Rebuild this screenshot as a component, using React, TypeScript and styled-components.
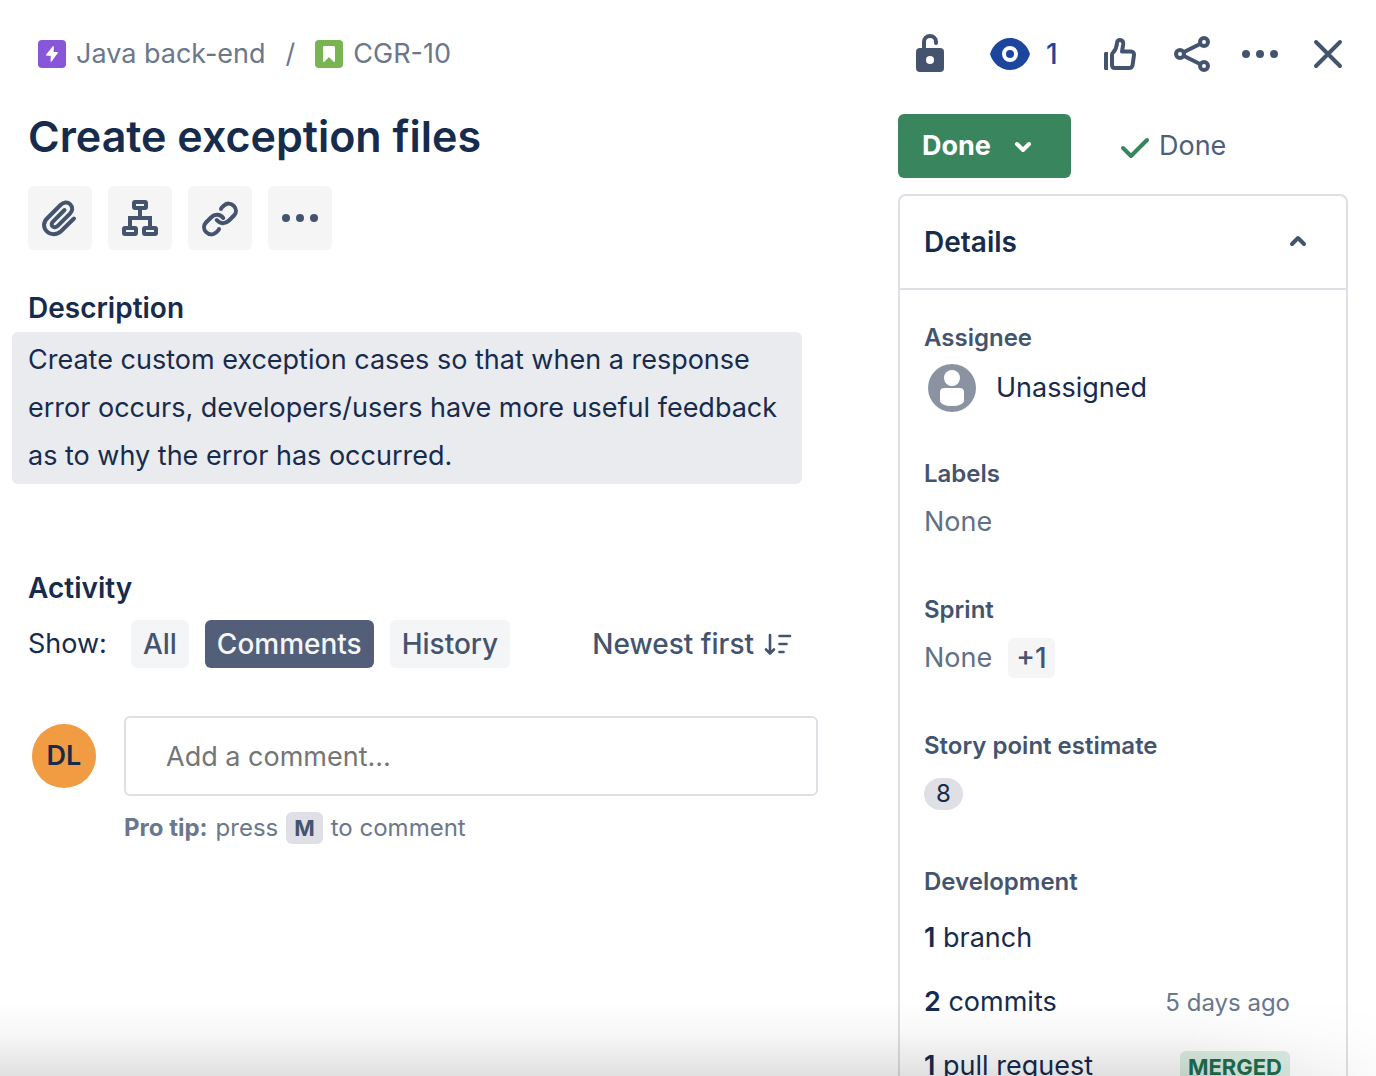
import React from "react";
import styled, { createGlobalStyle } from "styled-components";

const color = {
  text: "#172b4d",
  secondary: "#44546f",
  subtle: "#626f86",
  crumb: "#6b778c",
  line: "#dfe0e5",
  blue: "#1c469e",
  green: "#39855e",
};

const GlobalStyle = createGlobalStyle`
  *, *::before, *::after { box-sizing: border-box; }
  body {
    margin: 0;
    background: #fff;
    color: ${color.text};
    font-family: Inter, "Liberation Sans", sans-serif;
    font-size: 27px;
    line-height: 32px;
  }
  h1, h2, h3, p, ol, ul { margin: 0; padding: 0; }
  button, input { font: inherit; color: inherit; }
  a { color: inherit; text-decoration: none; }
`;

const Dialog = styled.div`
  display: grid;
  grid-template-columns: minmax(0, 1fr) 450px;
  column-gap: 80px;
  height: 100vh;
  padding: 28px 28px 0;
  overflow: hidden;
`;

const Column = styled.div`
  display: flex;
  flex-direction: column;
  min-width: 0;
`;

const Bar = styled.div`
  display: flex;
  align-items: center;
  height: 52px;
  flex-shrink: 0;
`;

/* ---------- breadcrumbs ---------- */

const Crumbs = styled.ol`
  display: flex;
  align-items: center;
  gap: 20px;
  padding-left: 10px;
  list-style: none;
  color: ${color.crumb};
`;

const Crumb = styled.a`
  display: flex;
  align-items: center;
  gap: 10px;
`;

/* ---------- header actions ---------- */

const Actions = styled(Bar)`
  justify-content: space-between;
  padding-left: 12px;
`;

const ActionGroup = styled.div<{ $gap: number }>`
  display: flex;
  align-items: center;
  gap: ${(p) => p.$gap}px;
`;

const IconButton = styled.button`
  display: flex;
  align-items: center;
  gap: 16px;
  min-width: 40px;
  height: 40px;
  padding: 0;
  border: 0;
  background: none;
  color: ${color.secondary};
  cursor: pointer;
`;

const WatchButton = styled(IconButton)`
  color: ${color.blue};
  font-size: 28px;
  font-weight: 500;
`;

/* ---------- main column ---------- */

const Title = styled.h1`
  margin-top: 28px;
  font-size: 43px;
  line-height: 56px;
  font-weight: 600;
`;

const Tools = styled.div`
  display: flex;
  gap: 16px;
  margin-top: 22px;
`;

const ToolButton = styled.button`
  display: grid;
  place-items: center;
  width: 64px;
  height: 64px;
  padding: 0;
  border: 0;
  border-radius: 6px;
  background: #f5f5f6;
  color: ${color.secondary};
  cursor: pointer;
`;

const Heading = styled.h2`
  font-size: 28px;
  line-height: 32px;
  font-weight: 600;
`;

const Section = styled.section<{ $space: number }>`
  margin-top: ${(p) => p.$space}px;
`;

const Description = styled.p`
  margin: 8px 16px 0 -16px;
  padding: 4px 16px;
  border-radius: 6px;
  background: #eaebef;
  line-height: 48px;
`;

const FilterRow = styled.div`
  display: flex;
  align-items: center;
  justify-content: space-between;
  margin-top: 16px;
  padding-right: 24px;
`;

const Filters = styled.div`
  display: flex;
  align-items: center;
  gap: 16px;
`;

const FilterLabel = styled.span`
  margin-right: 8px;
`;

const Filter = styled.button<{ $active?: boolean }>`
  height: 48px;
  padding: 0 12px;
  border: 0;
  border-radius: 6px;
  background: ${(p) => (p.$active ? "#535f78" : "#f4f5f7")};
  color: ${(p) => (p.$active ? "#f4f5f7" : color.secondary)};
  font-size: 28px;
  font-weight: 500;
  cursor: pointer;
`;

const SortButton = styled.button`
  display: flex;
  align-items: center;
  gap: 8px;
  padding: 0;
  border: 0;
  background: none;
  color: ${color.secondary};
  font-size: 28px;
  font-weight: 500;
  cursor: pointer;
`;

const Composer = styled.div`
  display: grid;
  grid-template-columns: 64px minmax(0, 1fr);
  column-gap: 28px;
  row-gap: 16px;
  align-items: center;
  margin-top: 48px;
  padding-left: 4px;
`;

const Avatar = styled.span`
  display: grid;
  place-items: center;
  width: 64px;
  height: 64px;
  border-radius: 50%;
  background: #f19c42;
  font-weight: 600;
`;

const CommentInput = styled.input`
  width: 100%;
  height: 80px;
  padding: 0 40px;
  border: 2px solid ${color.line};
  border-radius: 6px;
  background: #fff;
  &::placeholder {
    color: #757575;
    opacity: 1;
  }
`;

const Tip = styled.p`
  grid-column: 2;
  display: flex;
  align-items: center;
  gap: 8px;
  color: ${color.crumb};
  font-size: 24px;
`;

const Key = styled.kbd`
  padding: 0 8px;
  border-radius: 6px;
  background: ${color.line};
  color: ${color.secondary};
  font-family: inherit;
  font-size: 22px;
  font-weight: 700;
`;

/* ---------- side column ---------- */

const StatusRow = styled.div`
  display: flex;
  align-items: center;
  gap: 48px;
  margin-top: 34px;
`;

const StatusButton = styled.button`
  display: flex;
  align-items: center;
  gap: 20px;
  height: 64px;
  padding: 0 36px 0 24px;
  border: 0;
  border-radius: 6px;
  background: ${color.green};
  color: #fff;
  font-weight: 700;
  cursor: pointer;
`;

const Resolution = styled.span`
  display: flex;
  align-items: center;
  gap: 8px;
  color: #505f79;
`;

const Panel = styled.section`
  margin-top: 16px;
  border: 2px solid ${color.line};
  border-radius: 8px;
`;

const PanelHeader = styled.button`
  display: flex;
  align-items: center;
  justify-content: space-between;
  width: 100%;
  height: 94px;
  padding: 0 36px 0 24px;
  border: 0;
  border-bottom: 2px solid ${color.line};
  background: none;
  color: ${color.secondary};
  cursor: pointer;
`;

const PanelTitle = styled(Heading).attrs({ as: "span" })`
  color: ${color.text};
`;

const Fields = styled.div`
  padding: 36px 56px 24px 24px;
`;

const Field = styled.div`
  min-height: 136px;
`;

const FieldLabel = styled.h3`
  color: ${color.secondary};
  font-size: 24px;
  line-height: 24px;
  font-weight: 600;
`;

const Value = styled.div<{ $muted?: boolean }>`
  display: flex;
  align-items: center;
  gap: 16px;
  min-height: 48px;
  margin-top: 12px;
  color: ${(p) => (p.$muted ? color.subtle : color.text)};
`;

const Assignee = styled(Value)`
  gap: 20px;
  min-height: 52px;
  padding-left: 4px;
`;

const MoreButton = styled.button`
  height: 40px;
  padding: 0 8px;
  border: 0;
  border-radius: 6px;
  background: #f5f5f6;
  color: ${color.secondary};
  font-size: 28px;
  font-weight: 500;
  cursor: pointer;
`;

const Points = styled.span`
  padding: 0 12px;
  border-radius: 16px;
  background: ${color.line};
  font-size: 24px;
`;

const DevList = styled.ul`
  margin-top: 12px;
  list-style: none;
`;

const DevItem = styled.li`
  display: flex;
  align-items: baseline;
  justify-content: space-between;
  height: 64px;
  padding-top: 16px;
  white-space: nowrap;
`;

const Count = styled.b`
  font-weight: 600;
`;

const When = styled.span`
  color: ${color.crumb};
  font-size: 24px;
`;

const Lozenge = styled.span`
  padding: 0 8px;
  border-radius: 6px;
  background: #dcefe4;
  color: #216e4e;
  font-size: 22px;
  font-weight: 700;
`;

const BottomShade = styled.div`
  position: fixed;
  inset: auto 0 0 0;
  height: 76px;
  background: linear-gradient(
    to bottom,
    rgba(0, 0, 0, 0),
    rgba(0, 0, 0, 0.03) 45%,
    rgba(0, 0, 0, 0.12)
  );
  mask-image: linear-gradient(to right, #000 86%, rgba(0, 0, 0, 0.15));
  pointer-events: none;
`;

/* ---------- icons ---------- */

type IconProps = { w?: number; h?: number; children: React.ReactNode };

const Icon = ({ w = 40, h = 40, children }: IconProps) => (
  <svg
    width={w}
    height={h}
    viewBox={`0 0 ${w} ${h}`}
    fill="none"
    stroke="currentColor"
    strokeWidth={4}
    strokeLinecap="round"
    strokeLinejoin="round"
    aria-hidden="true"
  >
    {children}
  </svg>
);

const EpicIcon = () => (
  <Icon w={28} h={28}>
    <rect width="28" height="28" rx="4" fill="#8856d9" stroke="none" />
    <path
      d="M14.600 6.500 8.200 14.600c-.4.6-.1 1.200.6 1.200h4l-.3 5.200c0 .9.6 1.100 1.100.4l6-8.200c.4-.6.1-1.200-.6-1.200h-3.400l.2-5.100c0-.9-.5-1.100-1-.4Z"
      fill="#fff"
      stroke="none"
    />
  </Icon>
);

const StoryIcon = () => (
  <Icon w={28} h={28}>
    <rect width="28" height="28" rx="4" fill="#78b550" stroke="none" />
    <path
      d="M9.500 6h9c.9 0 1.500.6 1.500 1.500v13.700c0 .8-.8 1.100-1.400.5L14 17l-4.600 4.700c-.6.6-1.400.3-1.400-.5V7.500C8 6.600 8.600 6 9.500 6Z"
      fill="#fff"
      stroke="none"
    />
  </Icon>
);

const UnlockIcon = () => (
  <Icon>
    <path d="M14 16V8a6 6 0 0 1 12 0v1" />
    <rect x="6" y="14" width="28" height="24" rx="4" fill="currentColor" stroke="none" />
    <circle cx="20" cy="26" r="4" fill="#fff" stroke="none" />
  </Icon>
);

const EyeIcon = () => (
  <Icon>
    <path
      d="M0 20C2.500 11 10.500 4 20 4s17.500 7 20 16c-2.500 9-10.500 16-20 16S2.500 29 0 20Z"
      fill="currentColor"
      stroke="none"
    />
    <circle cx="20" cy="20" r="6" fill="currentColor" stroke="#fff" />
  </Icon>
);

const LikeIcon = () => (
  <Icon>
    <path d="M4 19.500c0-.8.6-1.500 1.500-1.500H8v18H5.500c-.9 0-1.500-.6-1.500-1.500Z" fill="currentColor" stroke="none" />
    <path d="M12 21c0-1 .3-1.600 1-2.300 2.700-2.700 3.700-5.700 4-9.500C17.200 7 18.300 6 20 6c2.400 0 3.500 1.900 3.200 4.300L22 17.500h9c2 0 3.300 1.500 3 3.500l-1.400 10c-.3 2-1.600 3-3.600 3H15c-2 0-3-1-3-3Z" />
  </Icon>
);

const ShareIcon = () => (
  <Icon>
    <circle cx="8" cy="20" r="4" />
    <circle cx="32" cy="8" r="4" />
    <circle cx="32" cy="32" r="4" />
    <path d="m12 18 16-8M12 22l16 8" />
  </Icon>
);

const DotsIcon = () => (
  <Icon>
    <g fill="currentColor" stroke="none">
      <circle cx="6" cy="20" r="4" />
      <circle cx="20" cy="20" r="4" />
      <circle cx="34" cy="20" r="4" />
    </g>
  </Icon>
);

const CloseIcon = () => (
  <Icon>
    <path d="m8 8 24 24M32 8 8 32" />
  </Icon>
);

const ClipIcon = () => (
  <Icon>
    <path d="M34 20.500 21 33.200c-4.300 4-10.400 3.800-14.200.2-3.700-3.600-3.700-9 .2-12.900L20.500 7c3-3 7-3.400 9.800-.6 2.700 2.700 2.500 6.500-.5 9.500L18 27.600c-1.900 1.900-4.200 2.100-5.500.8-1.300-1.300-1.100-3.200.7-5L24.500 12" />
  </Icon>
);

const TreeIcon = () => (
  <Icon>
    <rect x="14" y="4" width="12" height="6" rx="1" />
    <rect x="4" y="30" width="12" height="6" rx="1" />
    <rect x="24" y="30" width="12" height="6" rx="1" />
    <path d="M20 11v8M10 29V20h20v9" strokeLinejoin="miter" />
  </Icon>
);

const LinkIcon = () => (
  <Icon>
    <path d="M21 11c0-.6 1.500-2.200 3-3.500 3-2.600 7-2.500 9.800.3 2.800 2.900 2.900 6.900.2 9.700l-5 5c-3.700 3.700-9 3.500-12.300-.5" />
    <path d="M19 31c0 .6-1.500 2.200-3 3.500-3 2.600-7 2.500-9.800-.3-2.800-2.900-2.900-6.900-.2-9.700l5-5c3.700-3.700 9-3.500 12.300.5" />
  </Icon>
);

const ChevronDown = () => (
  <Icon w={24} h={24}>
    <path d="m6 10 6 6 6-6" />
  </Icon>
);

const ChevronUp = () => (
  <Icon w={24} h={24}>
    <path d="m6 14 6-6 6 6" />
  </Icon>
);

const CheckIcon = () => (
  <Icon w={32} h={32}>
    <path d="m4 18 8 8L28 10" stroke={color.green} />
  </Icon>
);

const SortIcon = () => (
  <Icon w={32} h={32}>
    <g strokeWidth="2.600">
      <path d="M8 7v18M4 21.500l4 4 4-4M17.500 8h10.500M17.500 16h7M17.500 24h4" />
    </g>
  </Icon>
);

const PersonIcon = () => (
  <Icon w={48} h={48}>
    <g stroke="none">
      <circle cx="24" cy="24" r="24" fill="#8b93a3" />
      <circle cx="24" cy="14" r="8" fill="#fff" />
      <path d="M12 28c0-2.400 1.600-4 4-4h16c2.400 0 4 1.600 4 4v8c0 4-5.500 6-12 6s-12-2-12-6Z" fill="#fff" />
    </g>
  </Icon>
);

/* ---------- page ---------- */

export default function App() {
  return (
    <>
      <GlobalStyle />
      <Dialog role="dialog" aria-labelledby="issue-title">
        <Column as="main">
          <Bar as="nav" aria-label="Breadcrumbs">
            <Crumbs>
              <li>
                <Crumb href="#epic">
                  <EpicIcon />
                  Java back-end
                </Crumb>
              </li>
              <li aria-hidden="true">/</li>
              <li>
                <Crumb href="#issue">
                  <StoryIcon />
                  CGR-10
                </Crumb>
              </li>
            </Crumbs>
          </Bar>

          <Title id="issue-title">Create exception files</Title>

          <Tools>
            <ToolButton aria-label="Attach"><ClipIcon /></ToolButton>
            <ToolButton aria-label="Add a child issue"><TreeIcon /></ToolButton>
            <ToolButton aria-label="Link issue"><LinkIcon /></ToolButton>
            <ToolButton aria-label="More"><DotsIcon /></ToolButton>
          </Tools>

          <Section $space={42}>
            <Heading>Description</Heading>
            <Description>
              Create custom exception cases so that when a response error
              occurs, developers/users have more useful feedback as to why the
              error has occurred.
            </Description>
          </Section>

          <Section $space={88}>
            <Heading>Activity</Heading>
            <FilterRow>
              <Filters role="group" aria-label="Activity filter">
                <FilterLabel>Show:</FilterLabel>
                <Filter>All</Filter>
                <Filter $active aria-pressed="true">Comments</Filter>
                <Filter>History</Filter>
              </Filters>
              <SortButton>
                Newest first
                <SortIcon />
              </SortButton>
            </FilterRow>

            <Composer>
              <Avatar>DL</Avatar>
              <CommentInput type="text" aria-label="Add a comment" placeholder="Add a comment…" />
              <Tip>
                <b>Pro tip:</b> press <Key>M</Key> to comment
              </Tip>
            </Composer>
          </Section>
        </Column>

        <Column as="aside">
          <Actions>
            <ActionGroup $gap={40}>
              <IconButton aria-label="Restrictions"><UnlockIcon /></IconButton>
              <WatchButton aria-label="Watchers">
                <EyeIcon />1
              </WatchButton>
            </ActionGroup>
            <ActionGroup $gap={28}>
              <ActionGroup $gap={32}>
                <IconButton aria-label="Vote"><LikeIcon /></IconButton>
                <IconButton aria-label="Share"><ShareIcon /></IconButton>
              </ActionGroup>
              <IconButton aria-label="More actions"><DotsIcon /></IconButton>
              <IconButton aria-label="Close"><CloseIcon /></IconButton>
            </ActionGroup>
          </Actions>

          <StatusRow>
            <StatusButton aria-haspopup="listbox">
              Done
              <ChevronDown />
            </StatusButton>
            <Resolution>
              <CheckIcon />
              Done
            </Resolution>
          </StatusRow>

          <Panel>
            <PanelHeader aria-expanded="true">
              <PanelTitle>Details</PanelTitle>
              <ChevronUp />
            </PanelHeader>
            <Fields>
              <Field>
                <FieldLabel>Assignee</FieldLabel>
                <Assignee>
                  <PersonIcon />
                  Unassigned
                </Assignee>
              </Field>
              <Field>
                <FieldLabel>Labels</FieldLabel>
                <Value $muted>None</Value>
              </Field>
              <Field>
                <FieldLabel>Sprint</FieldLabel>
                <Value $muted>
                  None
                  <MoreButton>+1</MoreButton>
                </Value>
              </Field>
              <Field>
                <FieldLabel>Story point estimate</FieldLabel>
                <Value>
                  <Points>8</Points>
                </Value>
              </Field>
              <Field>
                <FieldLabel>Development</FieldLabel>
                <DevList>
                  <DevItem>
                    <a href="#branches"><Count>1</Count> branch</a>
                  </DevItem>
                  <DevItem>
                    <a href="#commits"><Count>2</Count> commits</a>
                    <When>5 days ago</When>
                  </DevItem>
                  <DevItem>
                    <a href="#pull-requests"><Count>1</Count> pull request</a>
                    <Lozenge>MERGED</Lozenge>
                  </DevItem>
                </DevList>
              </Field>
            </Fields>
          </Panel>
        </Column>
      </Dialog>
      <BottomShade />
    </>
  );
}
